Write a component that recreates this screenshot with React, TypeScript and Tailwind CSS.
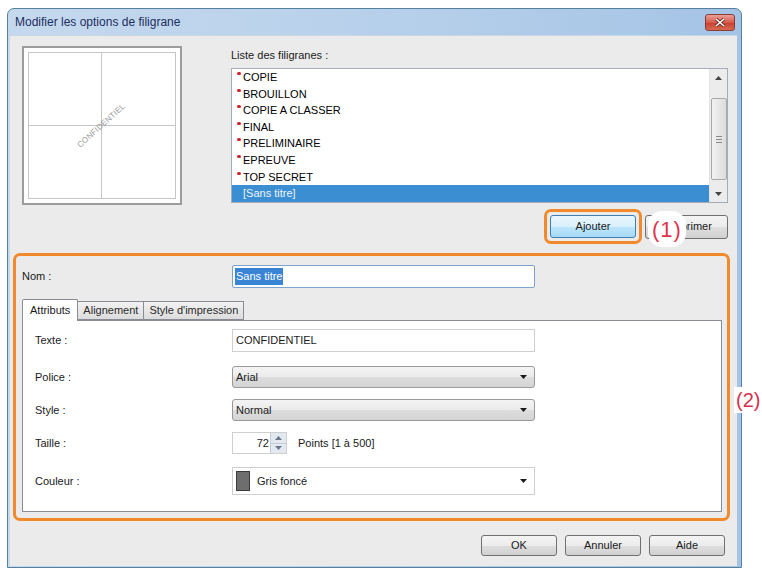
const items = ["COPIE", "BROUILLON", "COPIE A CLASSER", "FINAL", "PRELIMINAIRE", "EPREUVE", "TOP SECRET"]

const btnGray =
  "rounded-[3px] border border-[#707070] bg-[linear-gradient(to_bottom,#f4f4f4_0%,#ececec_50%,#dedede_51%,#d1d1d1_100%)] flex items-center justify-center text-[11px] text-[#1a1a1a]"

const Caret = ({ up = false, color = "#1a1a1a" }: { up?: boolean; color?: string }) => (
  <svg width="7" height="4" viewBox="0 0 7 4" className="block">
    <path d={up ? "M0 4L3.5 0L7 4Z" : "M0 0L7 0L3.5 4Z"} fill={color} />
  </svg>
)

const Select = ({ value }: { value: string }) => (
  <div className="h-[22px] w-[303px] rounded-[3px] border border-[#9a9a9a] bg-[linear-gradient(to_bottom,#f4f4f4_0%,#ebebeb_50%,#dddddd_51%,#d4d4d4_100%)] flex items-center pl-[3px] pr-[7px]">
    <span className="flex-1">{value}</span>
    <Caret />
  </div>
)

const Row = ({ label, className, children }: { label: string; className: string; children: React.ReactNode }) => (
  <div className={"flex items-center " + className}>
    <span className="w-[197px]">{label}</span>
    {children}
  </div>
)

const Preview = () => (
  <div className="w-[160px] h-[159px] border-2 border-[#9c9c9c] bg-white p-[4px]">
    <div className="relative w-full h-full border border-[#c6c6c6] grid grid-cols-2 grid-rows-2">
      <div className="border-r border-b border-[#c6c6c6]" />
      <div className="border-b border-[#c6c6c6]" />
      <div className="border-r border-[#c6c6c6]" />
      <div />
      <div className="absolute inset-0 flex items-center justify-center">
        <span className="-rotate-[42deg] text-[8px] text-[#9a9a9a] tracking-[0.2px]">CONFIDENTIEL</span>
      </div>
    </div>
  </div>
)

const ListBox = () => (
  <div className="h-[135px] w-[497px] border border-[#a5acb5] bg-white flex">
    <div className="flex-1 flex flex-col">
      {items.map((it) => (
        <div key={it} className="h-[16.6px] flex items-center pl-[5px] text-black">
          <span className="w-[6px] self-start mt-[3px]">
            <span className="block w-[4px] h-[3px] rounded-full bg-[#d0202e]" />
          </span>
          <span>{it}</span>
        </div>
      ))}
      <div className="h-[16.6px] flex items-center pl-[11px] bg-[#3a8ed1] text-[#eef5fc]">[Sans titre]</div>
    </div>
    <div className="w-[18px] bg-[#ececec] border-l border-[#e2e2e2] flex flex-col items-center">
      <div className="h-[17px] flex items-center justify-center"><Caret up color="#444" /></div>
      <div className="mt-[12px] h-[82px] w-[16px] rounded-[2px] border border-[#a9a9a9] bg-[linear-gradient(to_right,#f2f2f2,#dcdcdc)] flex flex-col items-center justify-center gap-[2px]">
        <div className="w-[6px] h-px bg-[#8a8a8a]" />
        <div className="w-[6px] h-px bg-[#8a8a8a]" />
        <div className="w-[6px] h-px bg-[#8a8a8a]" />
      </div>
      <div className="flex-1" />
      <div className="h-[17px] flex items-center justify-center"><Caret color="#444" /></div>
    </div>
  </div>
)

export default function App() {
  return (
    <div className="relative w-[762px] h-[571px] overflow-hidden bg-white font-['Liberation_Sans',Arial,sans-serif] text-[11px] text-[#1a1a1a]">
      {/* window */}
      <div className="ml-[7px] mt-[8px] w-[735px] h-[560px] border border-[#56809c] rounded-t-[7px] bg-[linear-gradient(to_right,#c5d9ee,#b6cfea_55%,#a4c4e6)] flex flex-col">
        <div className="h-[26px] flex items-center pl-[7px] pr-[6px]">
          <span className="flex-1 text-[12px] text-[#1c2d5e]">Modifier les options de filigrane</span>
          <div className="w-[30px] h-[17px] rounded-[3px] border border-[#8a3b35] bg-[linear-gradient(to_bottom,#e9a199,#d6594c_50%,#c7402f_51%,#d56a52)] flex items-center justify-center">
            <svg width="10" height="9" viewBox="0 0 10 9">
              <path d="M1 1L9 8M9 1L1 8" stroke="#5a2420" strokeWidth="3" />
              <path d="M1 1L9 8M9 1L1 8" stroke="#ffffff" strokeWidth="1.6" />
            </svg>
          </div>
        </div>

        {/* client */}
        <div className="flex-1 ml-[2px] mr-[4px] mb-[1px] bg-[#ebebeb] border-t border-[#c9d6e3] flex flex-col">
          <div className="flex pl-[12px] pt-[10px]">
            <Preview />
            <div className="ml-[49px] w-[497px] flex flex-col">
              <div className="h-[22px] leading-[18px]">Liste des filigranes :</div>
              <ListBox />
              <div className="mt-[6px] flex justify-end items-center gap-[3px]">
                <div className="border-[3px] border-[#f08a2c] rounded-[7px] p-[3px]">
                  <div className="w-[86px] h-[23px] rounded-[3px] border border-[#3c7fb1] bg-[linear-gradient(to_bottom,#eaf6fd_0%,#d9f0fc_50%,#bee6fd_51%,#a7d9f5_100%)] flex items-center justify-center">Ajouter</div>
                </div>
                <div className={btnGray + " w-[83px] h-[24px]"}>Supprimer</div>
              </div>
            </div>
          </div>

          {/* annotated group */}
          <div className="mt-[9px] ml-[3px] w-[717px] border-[3px] border-[#f08a2c] rounded-[7px] pl-[6px] pt-[9px] pb-[6px]">
            <div className="flex items-center h-[23px]">
              <span className="w-[210px]">Nom :</span>
              <div className="w-[303px] h-[23px] border border-[#7da2ce] rounded-[2px] bg-white flex items-center pl-[2px]">
                <span className="bg-[#3a84d6] text-white px-[1px] leading-[17px]">Sans titre</span>
              </div>
            </div>

            <div className="mt-[12px] flex items-end h-[20px] relative z-10">
              <div className="h-[22px] mb-[-1px] px-[7px] border border-b-0 border-[#898c95] bg-white flex items-center rounded-t-[2px]">Attributs</div>
              <div className="h-[19px] px-[5px] border border-l-0 border-[#898c95] bg-[linear-gradient(to_bottom,#f2f2f2,#dcdcdc)] flex items-center text-[#2a2a2a]">Alignement</div>
              <div className="h-[19px] px-[5px] border border-l-0 border-[#898c95] bg-[linear-gradient(to_bottom,#f2f2f2,#dcdcdc)] flex items-center text-[#2a2a2a]">Style d'impression</div>
            </div>
            <div className="w-[700px] h-[192px] border border-[#898c95] bg-white pl-[12px] pt-[8px] flex flex-col">
              <Row label="Texte :" className="">
                <div className="w-[303px] h-[23px] border border-[#cfcfcf] bg-white flex items-center pl-[3px]">CONFIDENTIEL</div>
              </Row>
              <Row label="Police :" className="mt-[14px]">
                <Select value="Arial" />
              </Row>
              <Row label="Style :" className="mt-[11px]">
                <Select value="Normal" />
              </Row>
              <Row label="Taille :" className="mt-[11px]">
                <div className="flex h-[22px] w-[55px] border border-[#cfcfcf] bg-white">
                  <span className="flex-1 text-right pr-[1px] leading-[20px]">72</span>
                  <div className="w-[16px] border-l border-[#c3cbd5] bg-[#e3e9f0] flex flex-col">
                    <div className="flex-1 flex items-center justify-center border-b border-[#c3cbd5]"><Caret up color="#6a7888" /></div>
                    <div className="flex-1 flex items-center justify-center"><Caret color="#6a7888" /></div>
                  </div>
                </div>
                <span className="ml-[11px]">Points [1 à 500]</span>
              </Row>
              <Row label="Couleur :" className="mt-[13px]">
                <div className="w-[303px] h-[28px] border border-[#cfcfcf] bg-white flex items-center pl-[3px] pr-[7px]">
                  <div className="w-[14px] h-[20px] bg-[#6e6e6e] border border-[#3a3a3a]" />
                  <span className="ml-[7px] flex-1">Gris foncé</span>
                  <Caret />
                </div>
              </Row>
            </div>
          </div>

          <div className="mt-[14px] pr-[12px] flex justify-end gap-[8px]">
            <div className={btnGray + " w-[76px] h-[21px]"}>OK</div>
            <div className={btnGray + " w-[76px] h-[21px]"}>Annuler</div>
            <div className={btnGray + " w-[76px] h-[21px]"}>Aide</div>
          </div>
        </div>
      </div>

      {/* callouts */}
      <div className="absolute left-[648px] top-[211px] h-[36px] px-[4px] rounded-[14px] bg-white flex items-center text-[22px] text-[#e0334d] tracking-[1px]">(1)</div>
      <div className="absolute left-[734px] top-[387px] h-[26px] pl-[2px] pr-[1px] bg-white flex items-center text-[20px] text-[#d63250]">(2)</div>
    </div>
  )
}
